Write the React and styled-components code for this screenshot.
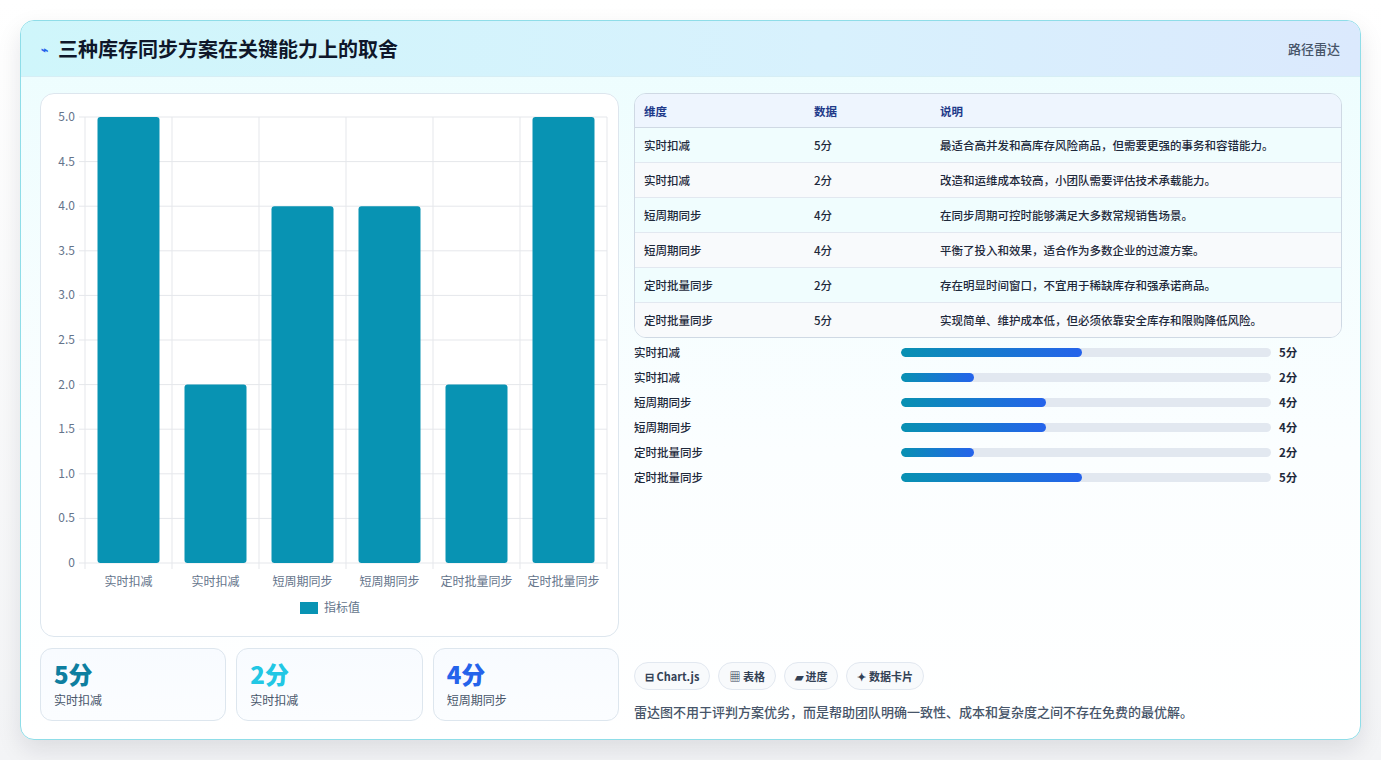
import React from "react";
import styled, { createGlobalStyle } from "styled-components";

const Global = createGlobalStyle`
  body { margin: 0; background: #f1f3f5; font-family: "Noto Sans CJK SC", "Noto Sans", sans-serif; color: #1e293b; }
`;

const Page = styled.div`
  padding: 20px 20px 20px 20px;
  height: 760px;
  box-sizing: border-box;
  background: linear-gradient(180deg, #ffffff 0%, #f3f4f6 100%);
`;

const Card = styled.div`
  height: 720px;
  box-sizing: border-box;
  border: 1px solid #8fdde8;
  border-radius: 14px;
  overflow: hidden;
  background: linear-gradient(180deg, #ecfdfe 0%, #fbfeff 60%, #ffffff 100%);
  box-shadow: 0 10px 24px rgba(15, 23, 42, 0.1);
  display: flex;
  flex-direction: column;
`;

const Header = styled.div`
  height: 55px;
  display: flex;
  align-items: center;
  justify-content: space-between;
  padding: 0 20px;
  background: linear-gradient(90deg, #cff6fb 0%, #d8f1fd 60%, #dbe9fd 100%);
  border-bottom: 1px solid #d6eef5;
`;

const Title = styled.h1`
  margin: 0;
  font-size: 20px;
  font-weight: 700;
  color: #0f172a;
  display: flex;
  align-items: center;
  gap: 10px;
`;

const Tag = styled.span`
  font-size: 13px;
  color: #475569;
  font-weight: 500;
`;

const Body = styled.div`
  flex: 1;
  display: grid;
  grid-template-columns: 579px 1fr;
  gap: 15px;
  padding: 16px 18px 18px 19px;
`;

const Col = styled.div`
  display: flex;
  flex-direction: column;
  gap: 11px;
`;

const ChartBox = styled.div`
  height: 544px;
  box-sizing: border-box;
  background: #fff;
  border: 1px solid #dde6ee;
  border-radius: 14px;
`;

const Stats = styled.div`
  display: grid;
  grid-template-columns: repeat(3, 1fr);
  gap: 10px;
`;

const Stat = styled.div`
  height: 73px;
  box-sizing: border-box;
  border: 1px solid #dde6ee;
  border-radius: 12px;
  background: linear-gradient(180deg, #f8fbff, #fbfdff);
  padding: 10px 13px;
`;

const StatVal = styled.div`
  font-size: 24px;
  font-weight: 800;
  color: ${(p) => p.c};
  line-height: 30px;
`;

const StatLabel = styled.div`
  font-size: 12px;
  color: #475569;
  margin-top: 2px;
`;

const Table = styled.table`
  width: 100%;
  border-collapse: separate;
  border-spacing: 0;
  border: 1px solid #cfd9e4;
  border-radius: 12px;
  overflow: hidden;
  font-size: 11.5px;
  th {
    text-align: left;
    height: 33px;
    padding: 0 9px;
    background: #eef5fe;
    color: #1e3a8a;
    font-weight: 600;
    border-bottom: 1px solid #cfd9e4;
  }
  td {
    height: 34px;
    padding: 0 9px;
    color: #1e293b;
    font-weight: 500;
    border-bottom: 1px solid #e2e8f0;
  }
  tr:last-child td { border-bottom: none; }
  tbody tr:nth-child(odd) td { background: #f0fdfe; }
  tbody tr:nth-child(even) td { background: #f8fafc; }
`;

const Bars = styled.div`
  display: flex;
  flex-direction: column;
  gap: 9px;
  margin-top: 6px;
`;

const BarRow = styled.div`
  display: grid;
  grid-template-columns: 267px 370px 1fr;
  align-items: center;
  font-size: 11.5px;
  font-weight: 500;
  gap: 0;
  height: 16px;
`;

const Track = styled.div`
  height: 9px;
  border-radius: 5px;
  background: #e2e8f0;
  overflow: hidden;
`;

const Fill = styled.div`
  height: 100%;
  border-radius: 5px;
  background: linear-gradient(90deg, #0891b2, #2563eb);
`;

const BarVal = styled.span`
  padding-left: 8px;
  font-weight: 700;
`;

const Chips = styled.div`
  margin-top: auto;
  display: flex;
  gap: 8px;
`;

const Chip = styled.span`
  height: 26px;
  padding: 0 10px;
  display: inline-flex;
  align-items: center;
  gap: 4px;
  border: 1px solid #e2e8f0;
  border-radius: 14px;
  background: #f8fafc;
  font-size: 11px;
  font-weight: 700;
  color: #334155;
`;

const Note = styled.p`
  margin: 12px 0 0;
  font-size: 13px;
  color: #475569;
  font-weight: 500;
`;

const rows = [
  ["实时扣减", 5, "最适合高并发和高库存风险商品，但需要更强的事务和容错能力。"],
  ["实时扣减", 2, "改造和运维成本较高，小团队需要评估技术承载能力。"],
  ["短周期同步", 4, "在同步周期可控时能够满足大多数常规销售场景。"],
  ["短周期同步", 4, "平衡了投入和效果，适合作为多数企业的过渡方案。"],
  ["定时批量同步", 2, "存在明显时间窗口，不宜用于稀缺库存和强承诺商品。"],
  ["定时批量同步", 5, "实现简单、维护成本低，但必须依靠安全库存和限购降低风险。"],
];

function Chart() {
  const x0 = 44, x1 = 566, y0 = 23, y1 = 469;
  const colW = (x1 - x0) / 6;
  const ticks = [];
  for (let i = 0; i <= 10; i++) ticks.push(i * 0.5);
  const font = '"Noto Sans CJK SC", "Noto Sans", sans-serif';
  return (
    <svg width="577" height="542" viewBox="0 0 577 542">
      {ticks.map((t) => {
        const y = y1 - (t / 5) * (y1 - y0);
        return (
          <g key={t}>
            <line x1={x0 - 6} x2={x1} y1={y} y2={y} stroke="#e5e7eb" />
            <text x={x0 - 10} y={y + 4} fontSize="12" fill="#64748b" textAnchor="end" fontFamily={font}>
              {t === 0 ? "0" : t.toFixed(1)}
            </text>
          </g>
        );
      })}
      {Array.from({ length: 7 }).map((_, i) => (
        <line key={i} x1={x0 + i * colW} x2={x0 + i * colW} y1={y0} y2={y1 + 6} stroke="#e5e7eb" />
      ))}
      {rows.map((r, i) => {
        const h = (r[1] / 5) * (y1 - y0);
        const cx = x0 + i * colW + colW / 2;
        return (
          <g key={i}>
            <rect x={cx - 31} y={y1 - h} width="62" height={h} rx="3" fill="#0893b3" />
            <text x={cx} y={y1 + 23} fontSize="12" fill="#64748b" textAnchor="middle" fontFamily={font}>{r[0]}</text>
          </g>
        );
      })}
      <rect x="259" y="508" width="18" height="12" fill="#0893b3" />
      <text x="283" y="518" fontSize="12" fill="#64748b" fontFamily={font}>指标值</text>
    </svg>
  );
}

export default function App() {
  return (
    <Page>
      <Global />
      <Card>
        <Header>
          <Title><span style={{ fontSize: 12, color: "#2563eb" }}>⌁</span>三种库存同步方案在关键能力上的取舍</Title>
          <Tag>路径雷达</Tag>
        </Header>
        <Body>
          <Col>
            <ChartBox><Chart /></ChartBox>
            <Stats>
              <Stat><StatVal c="#0e7fa0">5分</StatVal><StatLabel>实时扣减</StatLabel></Stat>
              <Stat><StatVal c="#22c7e4">2分</StatVal><StatLabel>实时扣减</StatLabel></Stat>
              <Stat><StatVal c="#2563eb">4分</StatVal><StatLabel>短周期同步</StatLabel></Stat>
            </Stats>
          </Col>
          <Col style={{ gap: 0 }}>
            <Table>
              <thead>
                <tr><th style={{ width: 152 }}>维度</th><th style={{ width: 108 }}>数据</th><th>说明</th></tr>
              </thead>
              <tbody>
                {rows.map((r, i) => (
                  <tr key={i}><td>{r[0]}</td><td>{r[1]}分</td><td>{r[2]}</td></tr>
                ))}
              </tbody>
            </Table>
            <Bars>
              {rows.map((r, i) => (
                <BarRow key={i}>
                  <span>{r[0]}</span>
                  <Track><Fill style={{ width: `${r[1] * 9.8}%` }} /></Track>
                  <BarVal>{r[1]}分</BarVal>
                </BarRow>
              ))}
            </Bars>
            <Chips>
              <Chip>⊟ Chart.js</Chip>
              <Chip>▦ 表格</Chip>
              <Chip>▰ 进度</Chip>
              <Chip>✦ 数据卡片</Chip>
            </Chips>
            <Note>雷达图不用于评判方案优劣，而是帮助团队明确一致性、成本和复杂度之间不存在免费的最优解。</Note>
          </Col>
        </Body>
      </Card>
    </Page>
  );
}
